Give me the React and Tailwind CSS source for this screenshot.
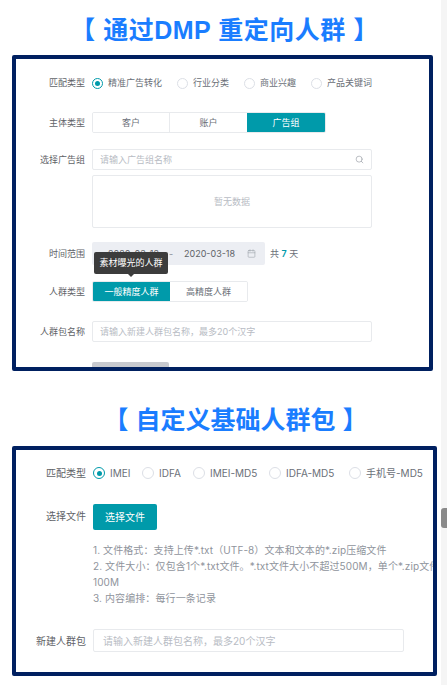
import { Search, Calendar } from 'lucide-react';

const font = "font-['Inter','Noto_Sans_CJK_SC',sans-serif]";

const Radio = ({ label, checked, className = '', large }) => (
  <div className={`flex items-center gap-[5px] ${className}`}>
    <span className={`flex shrink-0 items-center justify-center rounded-full border bg-white ${large ? 'h-[12px] w-[12px]' : 'h-[11px] w-[11px]'} ${checked ? 'border-[#009aaa]' : 'border-[#dcdfe6]'}`}>
      {checked && <span className="h-[5px] w-[5px] rounded-full bg-[#009aaa]" />}
    </span>
    <span className="whitespace-nowrap">{label}</span>
  </div>
);

const Label = ({ children, className = '' }) => (
  <div className={`shrink-0 text-right text-[#5f6368] ${className}`}>{children}</div>
);

const Title = ({ children, className = '' }) => (
  <h2 className={`text-center text-[25px] font-bold leading-[30px] text-[#1a7dff] font-['Liberation_Sans','Noto_Sans_CJK_SC',sans-serif] ${className}`}>
    {children}
  </h2>
);

const Segment = ({ children, active, className = '' }) => (
  <div className={`flex items-center justify-center ${active ? 'bg-[#009aaa] text-white' : 'bg-white text-[#6b7078]'} ${className}`}>
    {children}
  </div>
);

export default function App() {
  return (
    <div className={`flex h-[685px] w-[447px] overflow-hidden bg-white ${font}`}>
      <div className="w-[441px] shrink-0">
        <Title className="mt-[15px] pl-[8px] tracking-[0.5px]">【 通过DMP 重定向人群 】</Title>

        <div className="ml-[12px] mt-[10px] h-[316px] w-[421px] overflow-hidden rounded-[2px] border-4 border-[#002060] text-[9px] leading-[12px] text-[#6b7078]">
          <div className="mt-[12px] flex h-[24px] items-center">
            <Label className="w-[69px]">匹配类型</Label>
            <div className="ml-[7px] flex items-center">
              <Radio checked label="精准广告转化" className="w-[85px]" />
              <Radio label="行业分类" className="w-[67px]" />
              <Radio label="商业兴趣" className="w-[67px]" />
              <Radio label="产品关键词" />
            </div>
          </div>

          <div className="mt-[17px] flex h-[21px] items-center">
            <Label className="w-[69px]">主体类型</Label>
            <div className="ml-[7px] flex h-[21px] overflow-hidden rounded-[2px] border border-[#e8eaed]">
              <Segment className="w-[77px] border-r border-[#e8eaed]">客户</Segment>
              <Segment className="w-[77px]">账户</Segment>
              <Segment active className="w-[78px]">广告组</Segment>
            </div>
          </div>

          <div className="mt-[16px] flex">
            <Label className="w-[69px] leading-[21px]">选择广告组</Label>
            <div className="ml-[7px] w-[280px]">
              <div className="flex h-[21px] items-center justify-between rounded-[2px] border border-[#e8eaed] px-[7px] text-[#b8bcc4]">
                <span>请输入广告组名称</span>
                <Search size={9} strokeWidth={1.5} className="text-[#8a8f98]" />
              </div>
              <div className="mt-[5px] flex h-[53px] items-center justify-center rounded-[2px] border border-[#e8eaed] text-[#b8bcc4]">
                暂无数据
              </div>
            </div>
          </div>

          <div className="mt-[14px] flex h-[23px] items-center">
            <Label className="w-[69px]">时间范围</Label>
            <div className="relative ml-[7px] flex items-center">
              <div className="flex h-[23px] w-[173px] items-center rounded-[2px] bg-[#eceef3] pl-[16px] pr-[6px] text-[#5f6368]">
                <span className="w-[61px] whitespace-nowrap">2020-03-12</span>
                <span className="w-[15px] text-[#8a8f98]">-</span>
                <span className="whitespace-nowrap">2020-03-18</span>
                <Calendar size={9} strokeWidth={1.5} className="ml-auto mr-[3px] text-[#9aa0a8]" />
              </div>
              <span className="ml-[5px] whitespace-nowrap">共 <span className="font-semibold text-[#009aaa]">7</span> 天</span>
              <div className="absolute left-[2px] top-[10px] flex h-[22px] w-[74px] items-center justify-center rounded-[2px] bg-[#3c3c3c] text-white">
                素材曝光的人群
                <span className="absolute bottom-[-3px] left-[34px] h-0 w-0 border-x-[3px] border-t-[3px] border-x-transparent border-t-[#3c3c3c]" />
              </div>
            </div>
          </div>

          <div className="mt-[16px] flex h-[21px] items-center">
            <Label className="w-[69px]">人群类型</Label>
            <div className="ml-[7px] flex h-[21px] overflow-hidden rounded-[2px] border border-[#e8eaed]">
              <Segment active className="w-[77px]">一般精度人群</Segment>
              <Segment className="w-[77px]">高精度人群</Segment>
            </div>
          </div>

          <div className="mt-[19px] flex h-[21px] items-center">
            <Label className="w-[69px]">人群包名称</Label>
            <div className="ml-[7px] flex h-[21px] w-[280px] items-center rounded-[2px] border border-[#e8eaed] px-[7px] text-[#b8bcc4]">
              请输入新建人群包名称，最多20个汉字
            </div>
          </div>

          <div className="ml-[76px] mt-[20px] h-[24px] w-[77px] rounded-[2px] bg-[#c8cacf]" />
        </div>

        <Title className="mt-[34px] pl-[30px]">【 自定义基础人群包 】</Title>

        <div className="ml-[12px] mt-[11px] h-[230px] w-[425px] overflow-hidden rounded-[2px] border-4 border-[#002060] text-[10px] leading-[16px] text-[#6b7078]">
          <div className="mt-[15px] flex h-[16px] items-center">
            <Label className="w-[70px]">匹配类型</Label>
            <div className="ml-[7px] flex items-center">
              <Radio large checked label="IMEI" className="w-[49px]" />
              <Radio large label="IDFA" className="w-[51px]" />
              <Radio large label="IMEI-MD5" className="w-[76px]" />
              <Radio large label="IDFA-MD5" className="w-[80px]" />
              <Radio large label="手机号-MD5" />
            </div>
          </div>

          <div className="mt-[23px] flex">
            <Label className="w-[70px] leading-[24px]">选择文件</Label>
            <div className="ml-[7px] flex h-[26px] w-[64px] items-center justify-center rounded-[2px] bg-[#009aaa] text-white">
              选择文件
            </div>
          </div>

          <div className="ml-[77px] mt-[12px] whitespace-nowrap tracking-[0.1px] text-[#8f949c]">
            <p>1. 文件格式：支持上传*.txt（UTF-8）文本和文本的*.zip压缩文件</p>
            <p>2. 文件大小：仅包含1个*.txt文件。*.txt文件大小不超过500M，单个*.zip文件不超过</p>
            <p>100M</p>
            <p>3. 内容编排：每行一条记录</p>
          </div>

          <div className="mt-[23px] flex h-[23px] items-center">
            <Label className="w-[70px]">新建人群包</Label>
            <div className="ml-[7px] flex h-[23px] w-[311px] items-center rounded-[2px] border border-[#e8eaed] px-[9px] text-[#b8bcc4]">
              请输入新建人群包名称，最多20个汉字
            </div>
          </div>
        </div>
      </div>

      <div className="relative w-[6px] bg-[#f5f5f5]">
        <div className="absolute left-0 top-[508px] h-[20px] w-[6px] rounded-l-[3px] bg-[#8a8a8a]" />
      </div>
    </div>
  );
}
